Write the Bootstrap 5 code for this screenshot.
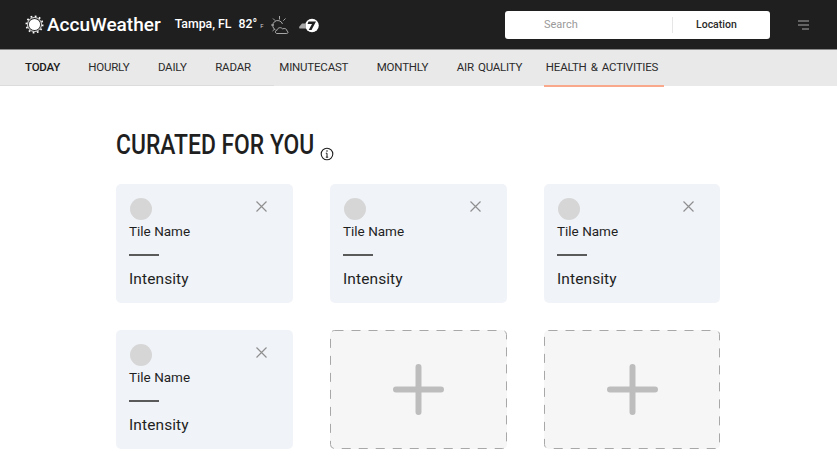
<!DOCTYPE html>
<html lang="en">
<head>
    <meta charset="UTF-8">
    <title>AccuWeather - Curated for you</title>
    <link href="https://cdn.jsdelivr.net/npm/bootstrap@5.3.3/dist/css/bootstrap.min.css" rel="stylesheet">
    <style>
        body { font-family: Roboto, "Liberation Sans", sans-serif; background: #fff; color: #1f1f1f; overflow: hidden; }
        .top-bar { height: 50px; background: #1f1f1f; border-bottom: 1px solid #8a8a8a; padding: 0 28px 0 25px; color: #fff; }
        .logo-text { font-size: 19px; font-weight: 500; line-height: 1; margin-left: 3px; }
        .city-text { font-size: 12.300px; font-weight: 500; margin-left: 14px; }
        .temp-text { font-size: 12.300px; font-weight: 500; margin-left: 7px; }
        .unit-text { font-size: 6px; margin: 2px 0 0 3px; color: #ccc; }
        .weather-icon { margin-left: 7px; }
        .station-icon { margin-left: 8px; }
        .search-box { width: 265px; height: 28px; background: #fff; border-radius: 3px; font-size: 11px; margin-left: auto; margin-right: 28px; }
        .search-part { width: 168px; padding-left: 39px; color: #9a9a9a; border-right: 1px solid #e6e6e6; line-height: 16px; }
        .location-part { color: #2a2a2a; padding-left: 23px; font-size: 10.500px; font-weight: 500; }
        .tab-bar { height: 36px; background: #e9e9e9; padding-left: 25px; font-size: 11.500px; letter-spacing: -.2px; word-spacing: 1.500px; position: relative; }
        .tab-bar::after { content: ""; position: absolute; left: 0; bottom: 0; width: 274px; height: 1px; background: #dcdcdc; }
        .tab-bar a { color: #2b2b2b; text-decoration: none; line-height: 35px; height: 36px; display: block; white-space: nowrap; }
        .tab-bar a.today-tab { font-weight: 500; color: #1a1a1a; margin-right: 28px; }
        .tab-bar a.plain-tab { margin-right: 28.500px; }
        .tab-bar a.health-tab { margin-left: -7px; padding: 0 6px 0 2px; width: 120px; border-bottom: 2px solid #f9a88b; height: 37px; position: relative; z-index: 1; }
        .main-area { padding: 43px 0 0 116px; }
        .page-title { font-size: 27px; line-height: 32px; font-weight: 500; margin: 0 0 23px; }
        .title-text { display: inline-block; width: 199px; white-space: nowrap; transform: scaleX(.847); transform-origin: left; }
        .info-icon { margin-left: 5px; }
        .tile-grid { display: grid; grid-template-columns: 177px 177px 176px; column-gap: 37px; row-gap: 27px; }
        .tile-box { height: 119px; background: #f0f3f8; border-radius: 5px; padding: 14px 13px 0; position: relative; }
        .tile-dot { width: 22px; height: 22px; border-radius: 50%; background: #d6d6d6; margin-left: 1px; }
        .tile-name { font-size: 13.500px; line-height: 17px; margin-top: 3px; }
        .tile-rule { width: 30px; height: 2px; background: #5a5a5a; margin-top: 14px; }
        .tile-value { font-size: 15.500px; line-height: 20px; margin-top: 13px; letter-spacing: .1px; }
        .tile-close { position: absolute; top: 17px; right: 26px; }
        .add-box { height: 119px; background: #f6f6f6; border-radius: 5px; }
        .add-box svg.add-frame { position: absolute; inset: 0; }
    </style>
</head>
<body>

<div class="top-bar d-flex align-items-center">
    <svg width="19" height="19" viewBox="0 0 19 19">
        <circle cx="9.5" cy="9.5" r="5.600" fill="#fff"/>
        <circle cx="9.5" cy="9.5" r="7" fill="none" stroke="#fff" stroke-width=".9"/>
        <circle cx="9.5" cy="9.5" r="8.200" fill="none" stroke="#fff" stroke-width="1.600" stroke-dasharray="1.800 2.493"/>
    </svg>
    <span class="logo-text">AccuWeather</span>
    <span class="city-text">Tampa, FL</span>
    <span class="temp-text">82°</span><span class="unit-text">F</span>
    <svg class="weather-icon" width="20" height="20" viewBox="0 0 20 20" fill="none" stroke="#c9c9c9" stroke-width=".8">
        <path d="M5.500 15a5 5 0 1 1 7-6"/>
        <path d="M9.500 1v3.500M1 10h3M3 3.500l2.200 2.200M15.500 3.500l-2.200 2.200M2.500 16l2.200-2"/>
        <path d="M7 18.500c-2 0-2.200-3 0-3.200 .5-2.800 4-3.500 5.500-1.500 2.300-1 4.800 .5 4.500 2.300 1.500 .5 1.200 2.400-.3 2.400z"/>
    </svg>
    <svg class="station-icon" width="22" height="18" viewBox="0 0 22 18">
        <circle cx="14" cy="9.500" r="6.800" fill="#fff"/>
        <path d="M10.500 5.500h7.500l-4.500 8.500h-2.800l3.300-6h-4.500z" fill="#1f1f1f"/>
        <path d="M1 11l3-3.500h4v5h-6.500z" fill="#a8a8a8"/>
    </svg>
    <div class="search-box d-flex align-items-center">
        <div class="search-part">Search</div>
        <div class="location-part">Location</div>
    </div>
    <svg width="11" height="10" viewBox="0 0 11 10" stroke="#a9a9a9" stroke-width="1">
        <path d="M0 1h11M0 5h11M4 9h7"/>
    </svg>
</div>

<nav class="tab-bar d-flex">
    <a class="today-tab" href="#">TODAY</a>
    <a class="plain-tab" href="#">HOURLY</a>
    <a class="plain-tab" href="#">DAILY</a>
    <a class="plain-tab" href="#">RADAR</a>
    <a class="plain-tab" href="#">MINUTECAST</a>
    <a class="plain-tab" href="#">MONTHLY</a>
    <a class="plain-tab" href="#">AIR QUALITY</a>
    <a class="health-tab" href="#">HEALTH &amp; ACTIVITIES</a>
</nav>

<main class="main-area">
    <h1 class="page-title d-flex align-items-end"><span class="title-text">CURATED FOR YOU</span><svg class="info-icon" width="14" height="14" viewBox="0 0 14 14" fill="none" stroke="#1f1f1f"><circle cx="7" cy="7" r="5.800" stroke-width="1.100"/><path d="M7 6.200v4M5.800 10.200h2.400M5.800 6.200h1.200" stroke-width="1"/><circle cx="7" cy="4" r=".8" fill="#1f1f1f" stroke="none"/></svg></h1>

    <div class="tile-grid">
        <div class="tile-box">
            <div class="tile-dot"></div>
            <div class="tile-name">Tile Name</div>
            <div class="tile-rule"></div>
            <div class="tile-value">Intensity</div>
            <svg class="tile-close" width="11" height="11" viewBox="0 0 11 11" stroke="#8f8f8f" stroke-width="1.200"><path d="M.5 .5l10 10M10.500 .5l-10 10"/></svg>
        </div>
        <div class="tile-box">
            <div class="tile-dot"></div>
            <div class="tile-name">Tile Name</div>
            <div class="tile-rule"></div>
            <div class="tile-value">Intensity</div>
            <svg class="tile-close" width="11" height="11" viewBox="0 0 11 11" stroke="#8f8f8f" stroke-width="1.200"><path d="M.5 .5l10 10M10.500 .5l-10 10"/></svg>
        </div>
        <div class="tile-box">
            <div class="tile-dot"></div>
            <div class="tile-name">Tile Name</div>
            <div class="tile-rule"></div>
            <div class="tile-value">Intensity</div>
            <svg class="tile-close" width="11" height="11" viewBox="0 0 11 11" stroke="#8f8f8f" stroke-width="1.200"><path d="M.5 .5l10 10M10.500 .5l-10 10"/></svg>
        </div>
        <div class="tile-box">
            <div class="tile-dot"></div>
            <div class="tile-name">Tile Name</div>
            <div class="tile-rule"></div>
            <div class="tile-value">Intensity</div>
            <svg class="tile-close" width="11" height="11" viewBox="0 0 11 11" stroke="#8f8f8f" stroke-width="1.200"><path d="M.5 .5l10 10M10.500 .5l-10 10"/></svg>
        </div>
        <div class="add-box position-relative d-flex align-items-center justify-content-center">
            <svg class="add-frame" width="177" height="119"><rect x=".5" y=".5" width="176" height="118" rx="4" fill="none" stroke="#a8a8a8" stroke-dasharray="9 8"/></svg>
            <svg width="51" height="51" viewBox="0 0 51 51" stroke="#bdbdbd" stroke-width="6" stroke-linecap="round"><path d="M25.500 3v45M3 25.500h45"/></svg>
        </div>
        <div class="add-box position-relative d-flex align-items-center justify-content-center">
            <svg class="add-frame" width="176" height="119"><rect x=".5" y=".5" width="175" height="118" rx="4" fill="none" stroke="#a8a8a8" stroke-dasharray="9 8"/></svg>
            <svg width="51" height="51" viewBox="0 0 51 51" stroke="#bdbdbd" stroke-width="6" stroke-linecap="round"><path d="M25.500 3v45M3 25.500h45"/></svg>
        </div>
    </div>
</main>

<script src="https://cdn.jsdelivr.net/npm/bootstrap@5.3.3/dist/js/bootstrap.bundle.min.js"></script>
</body>
</html>
